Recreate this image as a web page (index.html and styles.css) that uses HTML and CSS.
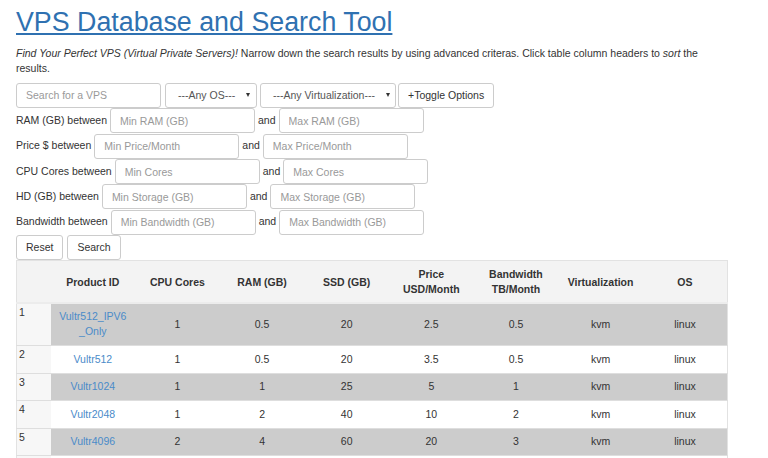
FILE: index.html
```html
<!DOCTYPE html>
<html>
<head>
<meta charset="utf-8">
<title>VPS Database and Search Tool</title>
<link rel="stylesheet" href="styles.css">
</head>
<body>
<div class="page">
  <h1 class="title"><a href="#">VPS Database and Search Tool</a></h1>
  <p class="intro"><em>Find Your Perfect VPS (Virtual Private Servers)!</em> Narrow down the search results by using advanced criteras. Click table column headers to <em>sort</em> the results.</p>

  <div class="row search-row">
    <input class="ctl search" type="text" placeholder="Search for a VPS">
    <div class="ctl select sel-os"><span>---Any OS---</span><span class="caret"></span></div>
    <div class="ctl select sel-virt"><span>---Any Virtualization---</span><span class="caret"></span></div>
    <button class="btn" type="button">+Toggle Options</button>
  </div>

  <div class="row">
    <span class="lbl">RAM (GB) between</span>
    <input class="ctl range" type="text" placeholder="Min RAM (GB)">
    <span class="lbl">and</span>
    <input class="ctl range" type="text" placeholder="Max RAM (GB)">
  </div>
  <div class="row">
    <span class="lbl">Price $ between</span>
    <input class="ctl range" type="text" placeholder="Min Price/Month">
    <span class="lbl">and</span>
    <input class="ctl range" type="text" placeholder="Max Price/Month">
  </div>
  <div class="row">
    <span class="lbl">CPU Cores between</span>
    <input class="ctl range" type="text" placeholder="Min Cores">
    <span class="lbl">and</span>
    <input class="ctl range" type="text" placeholder="Max Cores">
  </div>
  <div class="row">
    <span class="lbl">HD (GB) between</span>
    <input class="ctl range" type="text" placeholder="Min Storage (GB)">
    <span class="lbl">and</span>
    <input class="ctl range" type="text" placeholder="Max Storage (GB)">
  </div>
  <div class="row">
    <span class="lbl">Bandwidth between</span>
    <input class="ctl range" type="text" placeholder="Min Bandwidth (GB)">
    <span class="lbl">and</span>
    <input class="ctl range" type="text" placeholder="Max Bandwidth (GB)">
  </div>
  <div class="row btn-row">
    <button class="btn" type="button">Reset</button>
    <button class="btn" type="button">Search</button>
  </div>

  <table class="grid">
    <colgroup>
      <col class="c-idx"><col><col><col><col><col><col><col><col>
    </colgroup>
    <thead>
      <tr>
        <th class="idx"></th>
        <th>Product ID</th>
        <th>CPU Cores</th>
        <th>RAM (GB)</th>
        <th>SSD (GB)</th>
        <th>Price<br>USD/Month</th>
        <th>Bandwidth<br>TB/Month</th>
        <th>Virtualization</th>
        <th>OS</th>
      </tr>
    </thead>
    <tbody>
      <tr class="odd">
        <td class="idx">1</td>
        <td><a href="#">Vultr512_IPV6<wbr>_Only</a></td>
        <td>1</td><td>0.5</td><td>20</td><td>2.5</td><td>0.5</td><td>kvm</td><td>linux</td>
      </tr>
      <tr>
        <td class="idx">2</td>
        <td><a href="#">Vultr512</a></td>
        <td>1</td><td>0.5</td><td>20</td><td>3.5</td><td>0.5</td><td>kvm</td><td>linux</td>
      </tr>
      <tr class="odd">
        <td class="idx">3</td>
        <td><a href="#">Vultr1024</a></td>
        <td>1</td><td>1</td><td>25</td><td>5</td><td>1</td><td>kvm</td><td>linux</td>
      </tr>
      <tr>
        <td class="idx">4</td>
        <td><a href="#">Vultr2048</a></td>
        <td>1</td><td>2</td><td>40</td><td>10</td><td>2</td><td>kvm</td><td>linux</td>
      </tr>
      <tr class="odd">
        <td class="idx">5</td>
        <td><a href="#">Vultr4096</a></td>
        <td>2</td><td>4</td><td>60</td><td>20</td><td>3</td><td>kvm</td><td>linux</td>
      </tr>
      <tr>
        <td class="idx">6</td>
        <td><a href="#">Vultr8192</a></td>
        <td>4</td><td>8</td><td>100</td><td>40</td><td>4</td><td>kvm</td><td>linux</td>
      </tr>
    </tbody>
  </table>
</div>
</body>
</html>
```

FILE: styles.css
```css
* { box-sizing: border-box; }

html, body {
  margin: 0;
  padding: 0;
  background: #fff;
}

body {
  font-family: "Liberation Sans", Arial, Helvetica, sans-serif;
  font-size: 10.5px;
  line-height: 15px;
  color: #333;
}

.page {
  width: 712px;
  margin-left: 16px;
  padding-top: 7px;
}

.title {
  margin: 0;
  font-size: 26.8px;
  line-height: 30px;
  font-weight: normal;
}

.title a {
  color: #2f71b1;
  text-decoration: underline;
}

.intro {
  margin: 8.7px 0 7.3px;
}

.row {
  display: flex;
  align-items: center;
  gap: 3px;
  height: 25.3px;
}

.btn-row { gap: 4px; }

.search-row { gap: 0; align-items: flex-start; }
.search-row .search { margin-right: 4px; }
.search-row .sel-os { margin-right: 3px; }
.search-row .sel-virt { margin-right: 2px; }

.ctl {
  height: 25px;
  border: 1px solid #ccc;
  border-radius: 3px;
  background: #fff;
  font: inherit;
  color: #555;
  padding: 0 9px;
  outline: none;
  margin: 0;
}

.ctl::placeholder { color: #999; }

.search { width: 145px; }
.range { width: 145px; }

.select {
  display: flex;
  align-items: center;
  justify-content: space-between;
  padding: 0 5px 0 12px;
  white-space: nowrap;
}

.sel-os { width: 92px; padding-right: 6px; }
.sel-virt { width: 136px; }

.caret {
  width: 0;
  height: 0;
  border-left: 2.5px solid transparent;
  border-right: 2.5px solid transparent;
  border-top: 4px solid #333;
}

.lbl {
  line-height: 15px;
  margin-top: -1px;
  white-space: nowrap;
  color: #333;
}

.btn {
  height: 25px;
  padding: 0 9px;
  border: 1px solid #ccc;
  border-radius: 3px;
  background: #fff;
  color: #333;
  font: inherit;
  line-height: 15px;
  margin: 0;
}

.grid {
  width: 712px;
  border-collapse: collapse;
  table-layout: fixed;
  border: 1px solid #e2e2e2;
}

.c-idx { width: 34px; }

.grid th,
.grid td {
  padding: 5.75px 6px;
  text-align: center;
  vertical-align: middle;
  border-top: 1px solid #dedede;
}

.grid thead th {
  background: #f3f3f3;
  font-weight: bold;
  padding: 6px 6px 4.5px;
  border-top: 0;
  border-bottom: 2px solid #ececec;
}

.grid tbody tr { background: #fff; }
.grid tbody tr.odd { background: #cccccc; }

.grid .idx {
  background: #f7f7f7;
  text-align: left;
  vertical-align: top;
  padding: 1px 2px;
}

.grid thead th.idx { background: #f3f3f3; }

.grid a {
  color: #4a8bc9;
  text-decoration: none;
}
```
